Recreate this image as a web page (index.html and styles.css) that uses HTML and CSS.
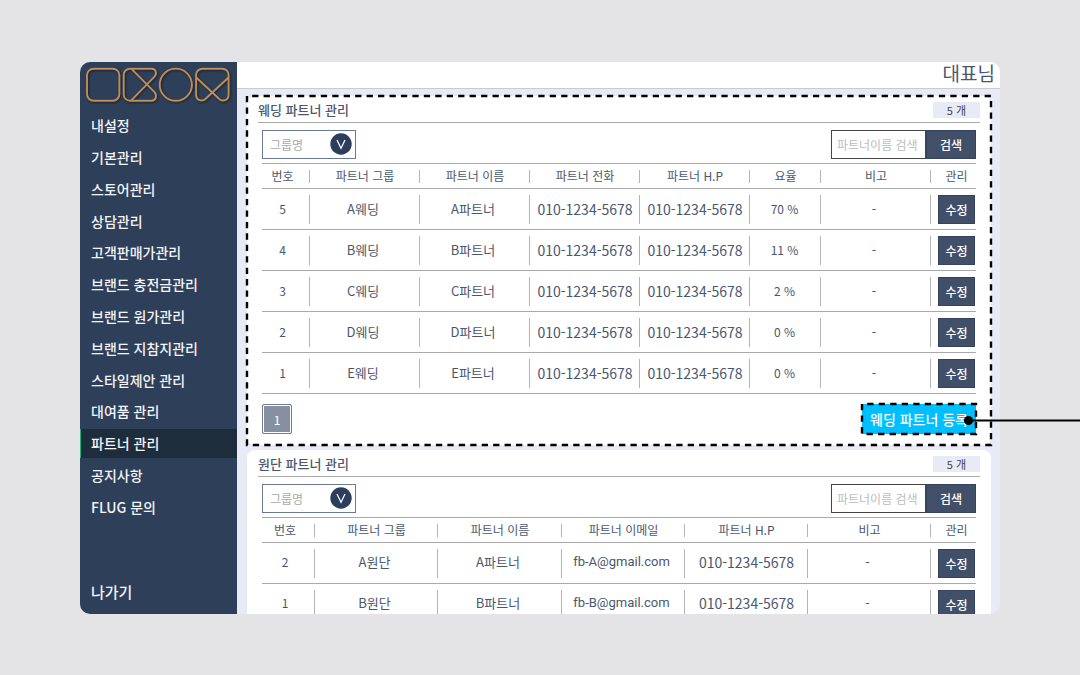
FILE: index.html
```html
<!DOCTYPE html>
<html lang="ko">
<head>
<meta charset="utf-8">
<meta name="viewport" content="width=device-width, initial-scale=1">
<title>파트너 관리</title>
<link rel="stylesheet" href="styles.css">
</head>
<body>
<div class="stage">
  <div class="app">
    <aside class="sidebar">
      <svg class="logo" viewBox="0 0 147 38" width="147" height="38" aria-hidden="true">
        <g fill="none" stroke="#c08d55" stroke-width="1.9" stroke-linejoin="round">
          <rect x="2" y="2.7" width="32.4" height="32" rx="6.5"/>
          <path d="M45 2.7H66.5C71 2.7 72.5 7.5 69.3 10.8L46.5 34.2M47 3.3L69.3 25.8C72.5 29.5 71 34.7 66.5 34.7H45A6.3 6.3 0 0 1 38.7 28.4V9A6.3 6.3 0 0 1 45 2.7"/>
          <circle cx="90.8" cy="18.7" r="16.1"/>
          <path d="M111.2 11.5L133.5 32.3C137.5 36.5 143.6 34.5 143.6 28.5V9A6.3 6.3 0 0 0 137.3 2.7H117.4A6.3 6.3 0 0 0 111.1 9V28.5C111.1 34.5 117.2 36.5 121.2 32.3L143.5 11.5"/>
        </g>
      </svg>
      <ul class="nav">
        <li><a href="#">내설정</a></li>
        <li><a href="#">기본관리</a></li>
        <li><a href="#">스토어관리</a></li>
        <li><a href="#">상담관리</a></li>
        <li><a href="#">고객판매가관리</a></li>
        <li><a href="#">브랜드 충전금관리</a></li>
        <li><a href="#">브랜드 원가관리</a></li>
        <li><a href="#">브랜드 지참지관리</a></li>
        <li><a href="#">스타일제안 관리</a></li>
        <li><a href="#">대여품 관리</a></li>
        <li><a href="#" class="active" aria-current="page">파트너 관리</a></li>
        <li><a href="#">공지사항</a></li>
        <li><a href="#">FLUG 문의</a></li>
      </ul>
      <a href="#" class="exit">나가기</a>
    </aside>
    <main class="main">
      <header class="topbar">대표님</header>
      <div class="content">
        <section class="panel">
          <svg class="dashes" aria-hidden="true"><rect width="100%" height="100%" pathLength="382"/></svg>
          <div class="panel-head"><h2>웨딩 파트너 관리</h2><span class="count">5 개</span></div>
          <div class="panel-body">
            <form class="tools">
              <div class="group">
                <select aria-label="그룹명"><option>그룹명</option></select>
                <svg viewBox="0 0 22 22" width="22" height="22" aria-hidden="true"><circle cx="11" cy="11" r="10.7" fill="#2d3e5a"/><path d="M7 7L11 15.3L15 7" fill="none" stroke="#fff" stroke-width="1.2"/></svg>
              </div>
              <div class="search">
                <input type="text" placeholder="파트너이름 검색" aria-label="파트너이름 검색">
                <button type="button">검색</button>
              </div>
            </form>
            <table>
              <colgroup><col class="w48"><col class="w110"><col class="w110"><col class="w110"><col class="w110"><col class="w71"><col class="w110"><col></colgroup>
              <thead><tr><th>번호</th><th>파트너 그룹</th><th>파트너 이름</th><th>파트너 전화</th><th>파트너 H.P</th><th>요율</th><th>비고</th><th>관리</th></tr></thead>
              <tbody>
                <tr><td class="num">5</td><td>A웨딩</td><td>A파트너</td><td class="tel">010-1234-5678</td><td class="tel">010-1234-5678</td><td class="rate">70 %</td><td>-</td><td><button type="button">수정</button></td></tr>
                <tr><td class="num">4</td><td>B웨딩</td><td>B파트너</td><td class="tel">010-1234-5678</td><td class="tel">010-1234-5678</td><td class="rate">11 %</td><td>-</td><td><button type="button">수정</button></td></tr>
                <tr><td class="num">3</td><td>C웨딩</td><td>C파트너</td><td class="tel">010-1234-5678</td><td class="tel">010-1234-5678</td><td class="rate">2 %</td><td>-</td><td><button type="button">수정</button></td></tr>
                <tr><td class="num">2</td><td>D웨딩</td><td>D파트너</td><td class="tel">010-1234-5678</td><td class="tel">010-1234-5678</td><td class="rate">0 %</td><td>-</td><td><button type="button">수정</button></td></tr>
                <tr><td class="num">1</td><td>E웨딩</td><td>E파트너</td><td class="tel">010-1234-5678</td><td class="tel">010-1234-5678</td><td class="rate">0 %</td><td>-</td><td><button type="button">수정</button></td></tr>
              </tbody>
            </table>
            <div class="foot">
              <button type="button" class="page">1</button>
              <button type="button" class="register">웨딩 파트너 등록<svg class="dashes" aria-hidden="true"><rect width="100%" height="100%" pathLength="50"/></svg></button>
            </div>
          </div>
        </section>
        <section class="panel">
          <div class="panel-head"><h2>원단 파트너 관리</h2><span class="count">5 개</span></div>
          <div class="panel-body">
            <form class="tools">
              <div class="group">
                <select aria-label="그룹명"><option>그룹명</option></select>
                <svg viewBox="0 0 22 22" width="22" height="22" aria-hidden="true"><circle cx="11" cy="11" r="10.7" fill="#2d3e5a"/><path d="M7 7L11 15.3L15 7" fill="none" stroke="#fff" stroke-width="1.2"/></svg>
              </div>
              <div class="search">
                <input type="text" placeholder="파트너이름 검색" aria-label="파트너이름 검색">
                <button type="button">검색</button>
              </div>
            </form>
            <table class="fabric">
              <colgroup><col class="w53"><col class="w123"><col class="w124"><col class="w123"><col class="w123"><col class="w123"><col></colgroup>
              <thead><tr><th>번호</th><th>파트너 그룹</th><th>파트너 이름</th><th>파트너 이메일</th><th>파트너 H.P</th><th>비고</th><th>관리</th></tr></thead>
              <tbody>
                <tr><td class="num">2</td><td>A원단</td><td>A파트너</td><td class="email">fb-A@gmail.com</td><td class="tel">010-1234-5678</td><td>-</td><td><button type="button">수정</button></td></tr>
                <tr><td class="num">1</td><td>B원단</td><td>B파트너</td><td class="email">fb-B@gmail.com</td><td class="tel">010-1234-5678</td><td>-</td><td><button type="button">수정</button></td></tr>
              </tbody>
            </table>
          </div>
        </section>
      </div>
    </main>
  </div>
  <svg class="pointer" viewBox="0 0 116 10" width="116" height="10" aria-hidden="true"><path d="M4.5 4.5H116" stroke="#000" stroke-width="2"/><circle cx="4.5" cy="4.5" r="4.5"/></svg>
</div>
</body>
</html>
```

FILE: styles.css
```css
* { box-sizing: border-box; }
body {
  margin: 0;
  background: #e4e4e6;
  color: #4a576e;
  font-family: "Noto Sans CJK KR", "Noto Sans", sans-serif;
  font-size: 13px;
  line-height: 18px;
}
button, input, select { font-family: inherit; margin: 0; border-radius: 0; }
a { color: inherit; text-decoration: none; }

.stage {
  position: relative;
  display: flex;
  height: 100vh;
  min-height: 600px;
  padding: 62px 80px 61px;
}
.app {
  flex: 1;
  display: flex;
  min-width: 0;
  overflow: hidden;
  border-radius: 10px;
  background: #e8eaf6;
}

.sidebar {
  display: flex;
  flex-direction: column;
  flex: 0 0 157px;
  background: #2e3f59;
  color: #f2f4f7;
  font-size: 14px;
  font-weight: 500;
}
.logo {
  margin: 4px 5px 6px;
  filter: drop-shadow(1px 1px 1px rgba(0, 0, 0, .5));
}
.nav {
  flex: 1;
  display: flex;
  flex-direction: column;
  margin: 0;
  padding: 0;
  list-style: none;
}
.nav li { flex: 1; display: flex; align-items: center; }
.nav a {
  flex: 1;
  height: 29px;
  padding-left: 10px;
  border-left: 1px solid transparent;
  line-height: 29px;
}
.nav .active { background: #1e2d3c; border-left-color: #1fb07c; }
.exit { padding: 60px 11px 13px; font-size: 15px; }

.main { flex: 1; min-width: 0; display: flex; flex-direction: column; }
.topbar {
  flex: none;
  padding: 0 5px 4px;
  border-bottom: 1px solid #c9cad2;
  background: #fff;
  font-size: 19px;
  line-height: 22px;
  text-align: right;
}
.content {
  display: flex;
  flex-direction: column;
  gap: 5px;
  padding: 7px 9px 0 10px;
}
.panel {
  position: relative;
  flex: none;
  padding: 0 11px 11px;
  border-radius: 8px;
  background: #fff;
}
.dashes {
  position: absolute;
  inset: 0;
  width: 100%;
  height: 100%;
  overflow: visible;
  pointer-events: none;
}
.dashes rect {
  fill: none;
  stroke: #000;
  stroke-width: 2.4;
  stroke-dasharray: 1.1 .9;
  stroke-dashoffset: 1.1;
}
.panel-head {
  display: flex;
  align-items: center;
  justify-content: space-between;
  height: 27px;
  padding-top: 2px;
  border-bottom: 1px solid #a9a9a9;
}
.panel-head h2 { margin: 0; font-size: 13px; font-weight: 500; }
.count {
  width: 47px;
  background: #e8eaf6;
  color: #444;
  font-size: 11px;
  line-height: 16px;
  text-align: center;
}
.panel-body { padding: 0 4px; }
.tools {
  display: flex;
  justify-content: space-between;
  padding: 7px 0 4px;
}
.group { position: relative; width: 94px; height: 29px; }
.group select {
  width: 100%;
  height: 100%;
  padding: 0 7px;
  appearance: none;
  border: 1px solid #6b7a94;
  background: #fff;
  color: #a9a9a9;
  font-size: 12px;
}
.group svg { position: absolute; top: 3px; right: 4px; pointer-events: none; }
.search { display: flex; }
.search input {
  width: 95px;
  height: 29px;
  padding: 0 5px;
  border: 1px solid #444;
  background: #fff;
  color: #4a576e;
  font-size: 12px;
}
.search input::placeholder { color: #bdbdbd; opacity: 1; }
.search button {
  width: 50px;
  padding: 0;
  border: 1px solid #34435f;
  background: #424f68;
  color: #fff;
  font-size: 12px;
  font-weight: 500;
}

table {
  width: 100%;
  table-layout: fixed;
  border-collapse: separate;
  border-spacing: 0;
  border-top: 1px solid #a9a9a9;
}
th, td {
  padding: 0;
  border-bottom: 1px solid #a9a9a9;
  background: linear-gradient(#b4b4b4, #b4b4b4) no-repeat right center;
  text-align: center;
  white-space: nowrap;
}
th { height: 25px; background-size: 1px 13px; font-size: 12px; font-weight: 400; }
td { height: 41px; padding-right: 4px; background-size: 1px 29px; }
th:first-child, td.num { padding-right: 7px; }
th:last-child, td:last-child { background: none; }
th:last-child { padding-left: 6px; }
td:last-child { padding: 0 1px 0 7px; }
.num, .rate { font-size: 12px; }
.rate { padding-right: 2px; }
.tel { padding-right: 0; font-size: 14px; }
.email { font-family: Roboto, sans-serif; }
td button {
  display: block;
  width: 100%;
  height: 29px;
  padding: 0;
  border: 1px solid #34435f;
  background: #424f68;
  color: #fff;
  font-size: 12px;
  font-weight: 500;
}
.w48 { width: 48px; }
.w53 { width: 53px; }
.w71 { width: 71px; }
.w110 { width: 110px; }
.w123 { width: 123px; }
.w124 { width: 124px; }
.fabric td:not(:last-child) { padding-bottom: 2px; }
.fabric .num { padding-bottom: 0; }

.foot {
  display: flex;
  align-items: center;
  justify-content: space-between;
  padding-top: 10px;
}
.page {
  width: 30px;
  height: 30px;
  padding: 0;
  border: 1px solid #6f7b90;
  border-radius: 2px;
  background: #8790a0;
  box-shadow: inset 0 0 0 1px #fff;
  color: #fff;
  font-size: 12px;
}
.register {
  position: relative;
  height: 30px;
  padding: 0 8px;
  border: 0;
  background: #00bfff;
  color: #fff;
  font-size: 14px;
  font-weight: 500;
}
.pointer { position: absolute; top: 416px; right: 0; }
```
